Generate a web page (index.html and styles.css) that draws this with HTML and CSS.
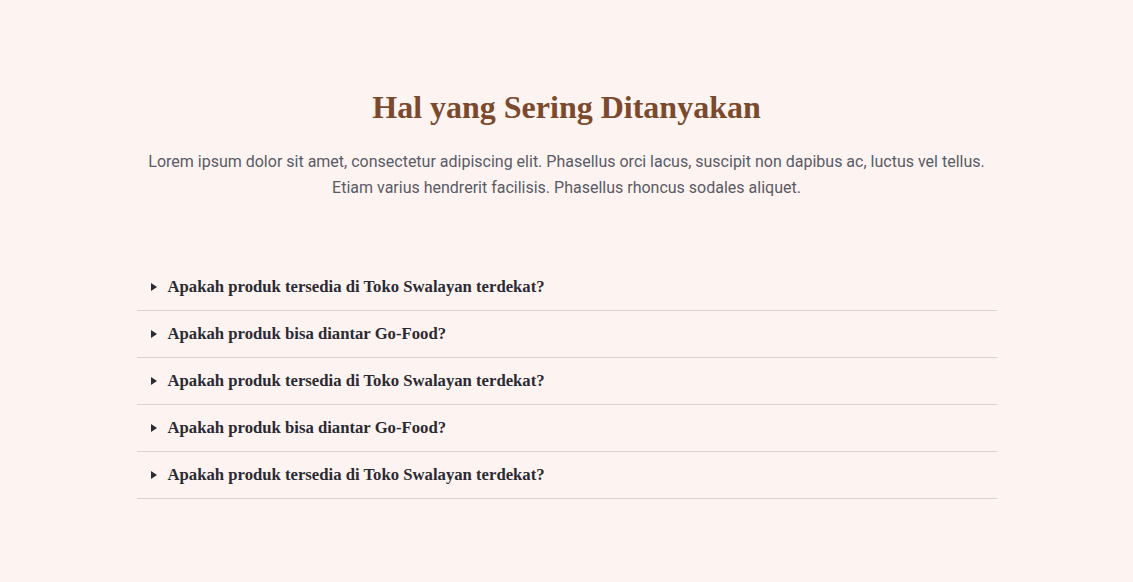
FILE: index.html
```html
<!DOCTYPE html>
<html lang="id">
<head>
<meta charset="utf-8">
<title>FAQ</title>
<link rel="stylesheet" href="styles.css">
</head>
<body>
<section class="faq">
  <h2 class="faq-title">Hal yang Sering Ditanyakan</h2>
  <p class="faq-lead">Lorem ipsum dolor sit amet, consectetur adipiscing elit. Phasellus orci lacus, suscipit non dapibus ac, luctus vel tellus. Etiam varius hendrerit facilisis. Phasellus rhoncus sodales aliquet.</p>
  <div class="faq-list">
    <details class="faq-item"><summary class="faq-q">Apakah produk tersedia di Toko Swalayan terdekat?</summary></details>
    <details class="faq-item"><summary class="faq-q">Apakah produk bisa diantar Go-Food?</summary></details>
    <details class="faq-item"><summary class="faq-q">Apakah produk tersedia di Toko Swalayan terdekat?</summary></details>
    <details class="faq-item"><summary class="faq-q">Apakah produk bisa diantar Go-Food?</summary></details>
    <details class="faq-item"><summary class="faq-q">Apakah produk tersedia di Toko Swalayan terdekat?</summary></details>
  </div>
</section>
</body>
</html>
```
FILE: styles.css
```css
html, body {
  margin: 0;
  padding: 0;
  background: #fdf4f1;
}
.faq {
  width: 860px;
  margin: 0 auto;
  padding-top: 86px;
  display: flex;
  flex-direction: column;
  align-items: stretch;
}
.faq-title {
  margin: 0;
  text-align: center;
  font-family: "Liberation Serif", "Times New Roman", serif;
  font-weight: 700;
  font-size: 32px;
  line-height: 42px;
  color: #7b4a2d;
}
.faq-lead {
  margin: 21px 0 0;
  text-align: center;
  font-family: Roboto, "Liberation Sans", sans-serif;
  font-size: 16px;
  line-height: 26px;
  color: #5a5a66;
}
.faq-list {
  margin-top: 63px;
  display: flex;
  flex-direction: column;
}
.faq-item {
  border-bottom: 1px solid #d6d3d2;
}
.faq-q {
  display: flex;
  align-items: center;
  gap: 11px;
  padding: 12px 0 12px 14px;
  font-family: "Liberation Serif", "Times New Roman", serif;
  font-weight: 700;
  font-size: 16.7px;
  line-height: 22px;
  color: #2b2a33;
  list-style: none;
  cursor: pointer;
}
.faq-q::-webkit-details-marker { display: none; }
.faq-q::before {
  content: "";
  width: 0;
  height: 0;
  border-top: 4.5px solid transparent;
  border-bottom: 4.5px solid transparent;
  border-left: 6px solid #2b2a33;
  flex: none;
}
```
